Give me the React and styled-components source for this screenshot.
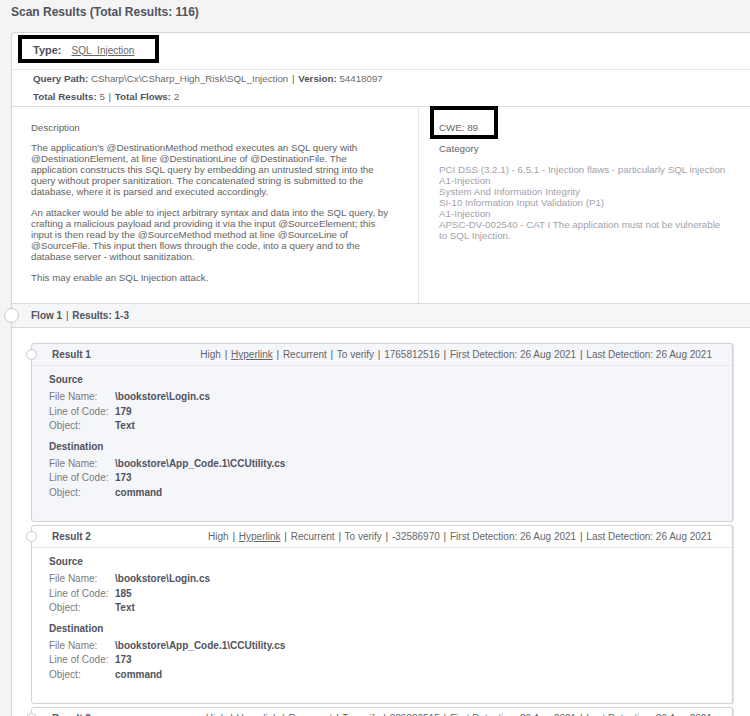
import styled, { createGlobalStyle } from "styled-components"

const GlobalStyle = createGlobalStyle`
  html, body {
    margin: 0;
    padding: 0;
    overflow: hidden;
    background: #f4f4f4;
  }
  body {
    font-family: "Liberation Sans", Arial, sans-serif;
    color: #555;
  }
`

const description = [
    "The application's @DestinationMethod method executes an SQL query with @DestinationElement, at line @DestinationLine of @DestinationFile. The application constructs this SQL query by embedding an untrusted string into the query without proper sanitization. The concatenated string is submitted to the database, where it is parsed and executed accordingly.",
    "An attacker would be able to inject arbitrary syntax and data into the SQL query, by crafting a malicious payload and providing it via the input @SourceElement; this input is then read by the @SourceMethod method at line @SourceLine of @SourceFile. This input then flows through the code, into a query and to the database server - without sanitization.",
    "This may enable an SQL Injection attack.",
]

const categories = [
    "PCI DSS (3.2.1) - 6.5.1 - Injection flaws - particularly SQL injection",
    "A1-Injection",
    "System And Information Integrity",
    "SI-10 Information Input Validation (P1)",
    "A1-Injection",
    "APSC-DV-002540 - CAT I The application must not be vulnerable to SQL Injection.",
]

const results = [
    {
        id: 1,
        active: true,
        similarity: "1765812516",
        source: { file: "\\bookstore\\Login.cs", line: "179", object: "Text" },
        destination: { file: "\\bookstore\\App_Code.1\\CCUtility.cs", line: "173", object: "command" },
    },
    {
        id: 2,
        similarity: "-32586970",
        source: { file: "\\bookstore\\Login.cs", line: "185", object: "Text" },
        destination: { file: "\\bookstore\\App_Code.1\\CCUtility.cs", line: "173", object: "command" },
    },
    {
        id: 3,
        similarity: "389380515",
        source: { file: "\\bookstore\\Login.cs", line: "191", object: "Text" },
        destination: { file: "\\bookstore\\App_Code.1\\CCUtility.cs", line: "173", object: "command" },
    },
]

function Location({ title, data }) {
    return (
        <Section>
            <SectionTitle>{title}</SectionTitle>
            <Rows>
                <Label>File Name:</Label>
                <Value>{data.file}</Value>
                <Label>Line of Code:</Label>
                <Value>{data.line}</Value>
                <Label>Object:</Label>
                <Value>{data.object}</Value>
            </Rows>
        </Section>
    )
}

function ResultCard({ r }) {
    return (
        <Card $active={r.active}>
            <CardHeader>
                <ResultName>Result {r.id}</ResultName>
                <ResultMeta>
                    High <Pipe>|</Pipe> <u>Hyperlink</u> <Pipe>|</Pipe> Recurrent <Pipe>|</Pipe> To verify <Pipe>|</Pipe> {r.similarity} <Pipe>|</Pipe> First Detection: 26 Aug 2021 <Pipe>|</Pipe> Last Detection: 26 Aug 2021
                </ResultMeta>
            </CardHeader>
            <CardBody>
                <Location title="Source" data={r.source} />
                <Location title="Destination" data={r.destination} />
            </CardBody>
        </Card>
    )
}

export default function App() {
    return (
        <Page>
            <GlobalStyle />
            <Title>Scan Results (Total Results: 116)</Title>
            <Panel>
                <TypeRow>
                    <Highlight>
                        <strong>Type:</strong>
                        <TypeLink>SQL_Injection</TypeLink>
                    </Highlight>
                </TypeRow>
                <InfoRows>
                    <InfoRow>
                        <b>Query Path:</b> CSharp\Cx\CSharp_High_Risk\SQL_Injection <Pipe>|</Pipe> <b>Version:</b> 54418097
                    </InfoRow>
                    <InfoRow>
                        <b>Total Results:</b> 5 <Pipe>|</Pipe> <b>Total Flows:</b> 2
                    </InfoRow>
                </InfoRows>
                <Details>
                    <DescColumn>
                        <SubTitle>Description</SubTitle>
                        {description.map((p, i) => <Paragraph key={i}>{p}</Paragraph>)}
                    </DescColumn>
                    <InfoColumn>
                        <CweBox>CWE: 89</CweBox>
                        <CategoryTitle>Category</CategoryTitle>
                        <CategoryList>
                            {categories.map((c, i) => <li key={i}>{c}</li>)}
                        </CategoryList>
                    </InfoColumn>
                </Details>
                <FlowHeader>
                    <b>Flow 1</b> <Pipe>|</Pipe> <b>Results: 1-3</b>
                </FlowHeader>
                <FlowBody>
                    {results.map(r => <ResultCard key={r.id} r={r} />)}
                </FlowBody>
            </Panel>
        </Page>
    )
}

const Page = styled.div`
    padding-left: 11px;
    min-height: 100vh;
    background: #f4f4f4;
`

const Title = styled.div`
    height: 32px;
    padding-top: 5px;
    box-sizing: border-box;
    font-size: 12px;
    line-height: 14px;
    font-weight: 700;
    color: #50535e;
`

const Panel = styled.div`
    background: #fff;
    border: 1px solid #d6d6d6;
    border-right: none;
    border-radius: 4px 0 0 0;
`

const TypeRow = styled.div`
    height: 37px;
    padding: 2px 0 0 6px;
    box-sizing: border-box;
    border-bottom: 1px solid #e6e6e6;
`

const Highlight = styled.div`
    display: flex;
    align-items: center;
    gap: 10px;
    width: 141px;
    height: 28px;
    box-sizing: border-box;
    border: 4px solid #000;
    padding: 2px 0 0 11px;
    strong {
        font-size: 11px;
        color: #50535e;
    }
`

const TypeLink = styled.span`
    font-size: 10px;
    color: #666;
    text-decoration: underline;
`

const InfoRows = styled.div`
    padding-left: 21px;
    border-bottom: 1px solid #dcdcdc;
`

const InfoRow = styled.div`
    height: 18px;
    line-height: 18px;
    font-size: 9.75px;
    color: #6a6a6a;
    b {
        color: #50535e;
    }
`

const Pipe = styled.span`
    color: #555;
    margin: 0 1px;
`

const Details = styled.div`
    display: grid;
    grid-template-columns: 406px 1fr;
    border-bottom: 1px solid #d9d9d9;
`

const DescColumn = styled.div`
    padding: 15px 27px 20px 19px;
    font-size: 9.75px;
    color: #636363;
`

const SubTitle = styled.div`
    line-height: 12px;
    margin-bottom: 8px;
`

const Paragraph = styled.p`
    margin: 0 0 10px;
    line-height: 11px;
    &:last-child {
        margin-bottom: 0;
    }
`

const InfoColumn = styled.div`
    border-left: 1px solid #e6e6e6;
    padding: 0 19px 0 11px;
    font-size: 9.75px;
    color: #666;
`

const CweBox = styled.div`
    width: 68px;
    height: 33px;
    box-sizing: border-box;
    margin-top: -1px;
    border: 4px solid #000;
    padding: 12px 0 0 5px;
    line-height: 12px;
`

const CategoryTitle = styled.div`
    padding-left: 9px;
    margin-top: 4px;
    line-height: 12px;
`

const CategoryList = styled.ul`
    list-style: none;
    margin: 9px 0 0;
    padding: 0 0 0 9px;
    line-height: 11px;
    color: #a2a2aa;
`

const FlowHeader = styled.div`
    position: relative;
    height: 23px;
    line-height: 23px;
    padding-left: 19px;
    background: #f5f6f8;
    border-bottom: 1px solid #d9d9d9;
    font-size: 10px;
    color: #50535e;
    &::before {
        content: "";
        position: absolute;
        left: -8px;
        top: 4px;
        width: 13px;
        height: 13px;
        border-radius: 50%;
        background: #fff;
        border: 1px solid #c8c8cc;
    }
`

const FlowBody = styled.div`
    display: flex;
    flex-direction: column;
    gap: 3px;
    padding: 15px 17px 0 19px;
`

const Card = styled.div`
    border: 1px solid #d2d2d6;
    border-radius: 3px;
    background: ${props => props.$active ? "#f5f6fa" : "#fff"};
    box-shadow: 1px 0 0 #e2e2e4;
`

const CardHeader = styled.div`
    position: relative;
    display: flex;
    justify-content: space-between;
    align-items: center;
    height: 21px;
    padding: 0 20px 0 20px;
    border-bottom: 1px solid #e8e8ec;
    font-size: 10px;
    &::before {
        content: "";
        position: absolute;
        left: -6px;
        top: 5px;
        width: 9px;
        height: 9px;
        border-radius: 50%;
        background: #fff;
        border: 1px solid #c8c8cc;
    }
`

const ResultName = styled.span`
    font-weight: 700;
    color: #50535e;
`

const ResultMeta = styled.span`
    color: #666;
`

const CardBody = styled.div`
    display: flex;
    flex-direction: column;
    gap: 6px;
    padding: 7px 0 21px 17px;
`

const Section = styled.div`
    font-size: 10px;
`

const SectionTitle = styled.div`
    line-height: 14px;
    margin-bottom: 3px;
    font-weight: 700;
    color: #50535e;
`

const Rows = styled.div`
    display: grid;
    grid-template-columns: 66px 1fr;
    line-height: 14.5px;
`

const Label = styled.span`
    color: #7a7a7a;
`

const Value = styled.span`
    font-weight: 700;
    color: #50535e;
`
